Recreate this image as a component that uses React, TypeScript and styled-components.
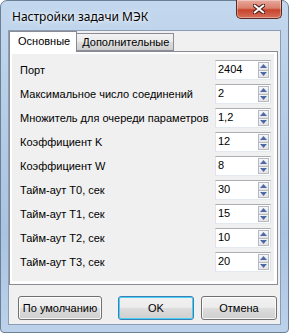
import React from "react";
import styled, { createGlobalStyle } from "styled-components";

const Global = createGlobalStyle`
  html, body { margin: 0; padding: 0; background: #fff; }
  body { width: 289px; height: 333px; overflow: hidden; }
`;

const Frame = styled.div`
  box-sizing: border-box;
  width: 289px;
  height: 333px;
  border: 1px solid #6b7f95;
  border-radius: 7px 7px 4px 4px;
  background: linear-gradient(180deg, #c3d8ee 0%, #b4cbe6 40%, #a9c3e2 70%, #bcd2ea 100%);
  display: flex;
  flex-direction: column;
  padding: 0 7px 7px 7px;
  font-family: "Liberation Sans", Arial, sans-serif;
`;

const TitleBar = styled.div`
  height: 29px;
  display: flex;
  align-items: flex-start;
  justify-content: space-between;
  position: relative;
`;

const Title = styled.div`
  font-family: "Noto Sans", "Open Sans", sans-serif;
  font-size: 12px;
  color: #000;
  margin: 7px 0 0 4px;
  text-shadow: 0 0 6px rgba(255,255,255,0.9), 0 0 3px rgba(255,255,255,0.9);
`;

const CloseBtn = styled.div`
  box-sizing: border-box;
  width: 46px;
  height: 19px;
  margin-top: -1px;
  margin-right: -1px;
  border: 1px solid #5b2a24;
  border-top: none;
  border-radius: 0 0 5px 5px;
  background: linear-gradient(180deg, #e8a99c 0%, #d9806d 45%, #c7432c 55%, #d5705a 100%);
  box-shadow: inset 0 0 0 1px rgba(255,255,255,0.35);
  display: flex;
  align-items: center;
  justify-content: center;
`;

const Client = styled.div`
  flex: 1;
  box-sizing: border-box;
  background: #f0f0f0;
  border: 1px solid #8a9db5;
  display: flex;
  flex-direction: column;
  padding: 0 2px 0 0;
`;

const TabRow = styled.div`
  display: flex;
  align-items: flex-end;
  height: 20px;
  padding-left: 0px;
  position: relative;
  z-index: 1;
`;

const Tab = styled.div<{ $active?: boolean }>`
  box-sizing: border-box;
  height: ${(p) => (p.$active ? 21 : 18)}px;
  margin-bottom: ${(p) => (p.$active ? -1 : 0)}px;
  padding: ${(p) => (p.$active ? "3px 6px 0 8px" : "2px 4px 0 5px")};
  border: 1px solid #898c95;
  border-bottom: ${(p) => (p.$active ? "none" : "1px solid #898c95")};
  ${(p) => (p.$active ? "" : "border-left: none;")}
  background: ${(p) =>
    p.$active ? "#ffffff" : "linear-gradient(180deg, #f2f2f2 0%, #ebebeb 50%, #dddddd 51%, #cfcfcf 100%)"};
  font-size: 11px;
  color: #000;
  white-space: nowrap;
`;

const Pane = styled.div`
  box-sizing: border-box;
  margin-left: 0px;
  height: 234px;
  border: 1px solid #898c95;
  background: #fff;
  padding: 2px 3px 3px 2px;
  display: flex;
`;

const Page = styled.div`
  flex: 1;
  background: #f0f0f0;
  display: flex;
  flex-direction: column;
  padding: 6px 3px 0 8px;
  gap: 4px;
`;

const Row = styled.div`
  display: flex;
  align-items: center;
  justify-content: space-between;
  height: 20px;
`;

const Label = styled.span`
  font-size: 11px;
  color: #000;
  white-space: nowrap;
`;

const Spin = styled.div`
  box-sizing: border-box;
  width: 56px;
  height: 20px;
  border: 1px solid #abadb3;
  border-left-color: #e2e3ea;
  border-right-color: #dbdfe6;
  border-bottom-color: #e3e9ef;
  background: #fff;
  display: flex;
  align-items: stretch;
`;

const SpinText = styled.div`
  flex: 1;
  font-size: 11px;
  line-height: 17px;
  padding-left: 2px;
  color: #000;
`;

const Arrows = styled.div`
  display: flex;
  flex-direction: column;
  width: 11px;
  margin: 1px 1px 1px 0;
`;

const ArrowBtn = styled.div<{ $down?: boolean }>`
  flex: 1;
  box-sizing: border-box;
  border: 1px solid #b6b9c2;
  ${(p) => (p.$down ? "border-top: none;" : "")}
  background: linear-gradient(180deg, #f7f7f7, #e4e4e4);
  display: flex;
  align-items: center;
  justify-content: center;
`;

const Footer = styled.div`
  display: flex;
  align-items: center;
  padding: 11px 0 0 9px;
  gap: 7px;
`;

const Button = styled.button<{ $w: number; $default?: boolean; $gapLeft?: number }>`
  box-sizing: border-box;
  width: ${(p) => p.$w}px;
  height: 24px;
  margin-left: ${(p) => p.$gapLeft ?? 0}px;
  border: 1px solid ${(p) => (p.$default ? "#3c7fb1" : "#707070")};
  border-radius: 3px;
  background: linear-gradient(180deg, #f2f2f2 0%, #ebebeb 50%, #dddddd 51%, #cfcfcf 100%);
  box-shadow: inset 0 0 0 1px ${(p) => (p.$default ? "#48d0f9" : "rgba(255,255,255,0.8)")};
  font-family: "Liberation Sans", Arial, sans-serif;
  font-size: 11px;
  color: #000;
  padding: 0;
`;

const Up = () => (
  <svg width="7" height="4" viewBox="0 0 7 4">
    <path d="M0 4 L3.5 0 L7 4 Z" fill="#4c6aa8" />
  </svg>
);
const Down = () => (
  <svg width="7" height="4" viewBox="0 0 7 4">
    <path d="M0 0 L3.5 4 L7 0 Z" fill="#4c6aa8" />
  </svg>
);

const rows: [string, string][] = [
  ["Порт", "2404"],
  ["Максимальное число соединений", "2"],
  ["Множитель для очереди параметров", "1,2"],
  ["Коэффициент K", "12"],
  ["Коэффициент W", "8"],
  ["Тайм-аут T0, сек", "30"],
  ["Тайм-аут T1, сек", "15"],
  ["Тайм-аут T2, сек", "10"],
  ["Тайм-аут T3, сек", "20"],
];

export default function App() {
  return (
    <>
      <Global />
      <Frame>
        <TitleBar>
          <Title>Настройки задачи МЭК</Title>
          <CloseBtn>
            <svg width="12" height="10" viewBox="0 0 12 10">
              <path
                d="M1 1 L11 9 M11 1 L1 9"
                stroke="#4a1c16"
                strokeWidth="4"
                strokeLinecap="square"
              />
              <path d="M1 1 L11 9 M11 1 L1 9" stroke="#fff" strokeWidth="2" />
            </svg>
          </CloseBtn>
        </TitleBar>
        <Client>
          <TabRow>
            <Tab $active>Основные</Tab>
            <Tab>Дополнительные</Tab>
          </TabRow>
          <Pane>
            <Page>
              {rows.map(([l, v]) => (
                <Row key={l}>
                  <Label>{l}</Label>
                  <Spin>
                    <SpinText>{v}</SpinText>
                    <Arrows>
                      <ArrowBtn>
                        <Up />
                      </ArrowBtn>
                      <ArrowBtn $down>
                        <Down />
                      </ArrowBtn>
                    </Arrows>
                  </Spin>
                </Row>
              ))}
            </Page>
          </Pane>
          <Footer>
            <Button $w={84}>По умолчанию</Button>
            <Button $w={76} $default $gapLeft={9}>
              OK
            </Button>
            <Button $w={76}>Отмена</Button>
          </Footer>
        </Client>
      </Frame>
    </>
  );
}
